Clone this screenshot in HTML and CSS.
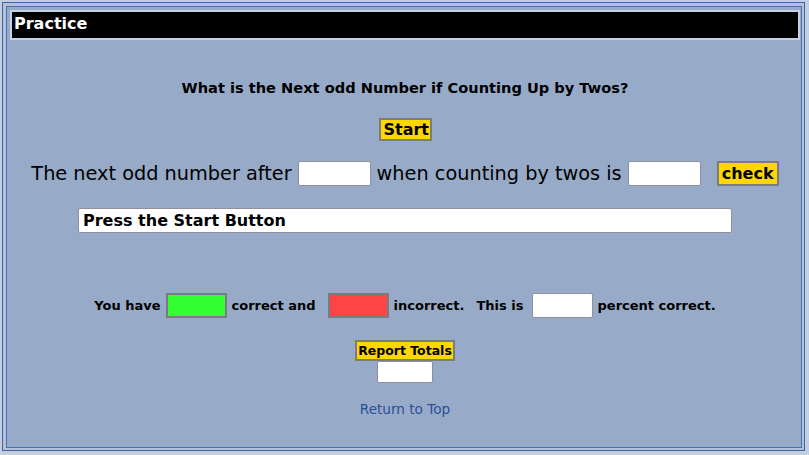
FILE: index.html
```html
<!DOCTYPE html>
<html>
<head>
<meta charset="utf-8">
<link rel="stylesheet" href="styles.css">
</head>
<body>
<div class="frame">
  <div class="panel">
    <div class="titlebar">Practice</div>
    <div class="content">
      <h2 class="question">What is the Next odd Number if Counting Up by Twos?</h2>
      <button class="btn btn-start">Start</button>
      <div class="row">
        <span>The next odd number after</span>
        <input class="field field-row" type="text">
        <span>when counting by twos is</span>
        <input class="field field-row" type="text">
        <button class="btn btn-check">check</button>
      </div>
      <input class="field msg" type="text" value="Press the Start Button">
      <div class="stats">
        <span>You have</span>
        <span class="box box-green"></span>
        <span>correct and</span>
        <span class="box box-red gap-left"></span>
        <span>incorrect.</span>
        <span class="gap-left">This is</span>
        <input class="field field-pct" type="text">
        <span>percent correct.</span>
      </div>
      <button class="btn btn-report">Report Totals</button>
      <input class="field field-total" type="text">
      <a class="top-link" href="#">Return to Top</a>
    </div>
  </div>
</div>
</body>
</html>
```

FILE: styles.css
```css
html, body {
  margin: 0;
  padding: 0;
}
body {
  background: #c3cee0;
  font-family: "DejaVu Sans", Verdana, sans-serif;
  width: 809px;
  height: 455px;
  overflow: hidden;
}
.frame {
  margin: 2px 4px 0 2px;
  height: 449px;
  box-sizing: border-box;
  border: 1px solid #3f64a3;
  padding: 3px 2px 2px 3px;
  background: #b3c2d9;
}
.panel {
  height: 100%;
  box-sizing: border-box;
  border: 1px solid #4d70ab;
  background: #97abc8;
  padding: 3px 1px 0 3px;
}
.titlebar {
  border: 2px solid #c5d1e3;
  background: #000;
  color: #fff;
  font-weight: bold;
  font-size: 16px;
  height: 26px;
  line-height: 24px;
  padding-left: 2px;
}
.content {
  display: flex;
  flex-direction: column;
  align-items: center;
}
.question {
  margin: 39px 0 0 0;
  font-size: 14.6px;
  line-height: 18px;
  font-weight: bold;
  color: #000;
}
.btn {
  background: #ffd700;
  border: 2px solid #7c7c7c;
  font-family: "DejaVu Sans", Verdana, sans-serif;
  font-weight: bold;
  color: #000;
  padding: 0 3px;
  box-sizing: border-box;
  white-space: nowrap;
}
.btn-start {
  margin-top: 21px;
  height: 23px;
  font-size: 16px;
  width: 53px;
}
.row {
  margin-top: 20px;
  display: flex;
  align-items: center;
  gap: 6px;
  font-size: 19.3px;
  color: #000;
}
.field {
  background: #fff;
  border: 1px solid #8f8f9d;
  border-radius: 2px;
  box-sizing: border-box;
  margin: 0;
  font-family: "DejaVu Sans", Verdana, sans-serif;
}
.field-row {
  width: 73px;
  height: 25px;
}
.btn-check {
  margin-left: 10px;
  height: 25px;
  width: 62px;
  font-size: 16px;
}
.msg {
  margin-top: 22px;
  width: 654px;
  height: 25px;
  font-size: 16px;
  font-weight: bold;
  color: #000;
  padding: 0 4px;
}
.stats {
  margin-top: 60px;
  display: flex;
  align-items: center;
  gap: 5px;
  font-size: 13px;
  font-weight: bold;
  color: #000;
}
.box {
  display: block;
  width: 61px;
  height: 25px;
  box-sizing: border-box;
  border: 2px solid #7a7a86;
}
.box-green { background: #33ff33; }
.box-red { background: #ff4444; }
.gap-left { margin-left: 7px; }
.field-pct {
  width: 61px;
  height: 25px;
  margin-left: 3px;
}
.btn-report {
  margin-top: 22px;
  height: 21px;
  width: 100px;
  font-size: 12.5px;
  padding: 0;
}
.field-total {
  width: 56px;
  height: 22px;
}
.top-link {
  margin-top: 18px;
  font-size: 13.6px;
  line-height: 17px;
  color: #2d4c9a;
  text-decoration: none;
}
```
